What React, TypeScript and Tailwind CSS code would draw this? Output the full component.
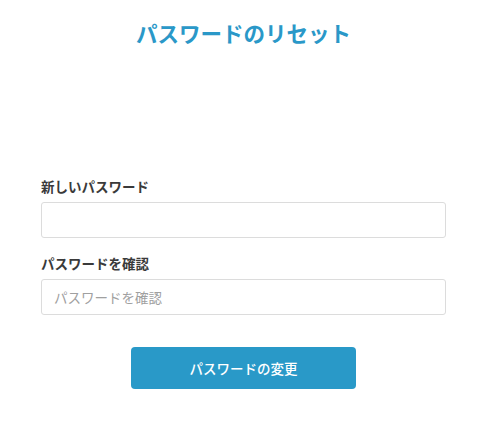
import React from "react";

export default function App() {
  const font = { fontFamily: '"Noto Sans CJK JP", "Noto Sans", sans-serif' };
  return (
    <div className="w-[490px] h-[439px] bg-white" style={font}>
      <div className="pl-[41px] pr-[44px] pt-[18px]">
        <h1 className="text-center text-[21.5px] leading-[30px] font-bold text-[#2a98c8]">
          パスワードのリセット
        </h1>
        <div className="mt-[128px] flex flex-col">
          <label className="text-[13.5px] leading-[20px] font-bold text-[#3a3a3a] mb-[6px]">
            新しいパスワード
          </label>
          <input
            type="password"
            className="h-[36px] w-full border border-[#dcdcdc] rounded-[3px] px-[12px] text-[13.5px] outline-none"
          />
          <label className="mt-[15px] text-[13.5px] leading-[20px] font-bold text-[#3a3a3a] mb-[6px]">
            パスワードを確認
          </label>
          <input
            type="password"
            placeholder="パスワードを確認"
            className="h-[36px] w-full border border-[#dcdcdc] rounded-[3px] px-[12px] text-[13.5px] outline-none placeholder:text-[#a0a0a0]"
          />
          <div className="mt-[32px] flex justify-center">
            <button className="w-[225px] h-[42px] rounded-[4px] bg-[#2999c8] text-white text-[13.5px] font-medium">
              パスワードの変更
            </button>
          </div>
        </div>
      </div>
    </div>
  );
}
